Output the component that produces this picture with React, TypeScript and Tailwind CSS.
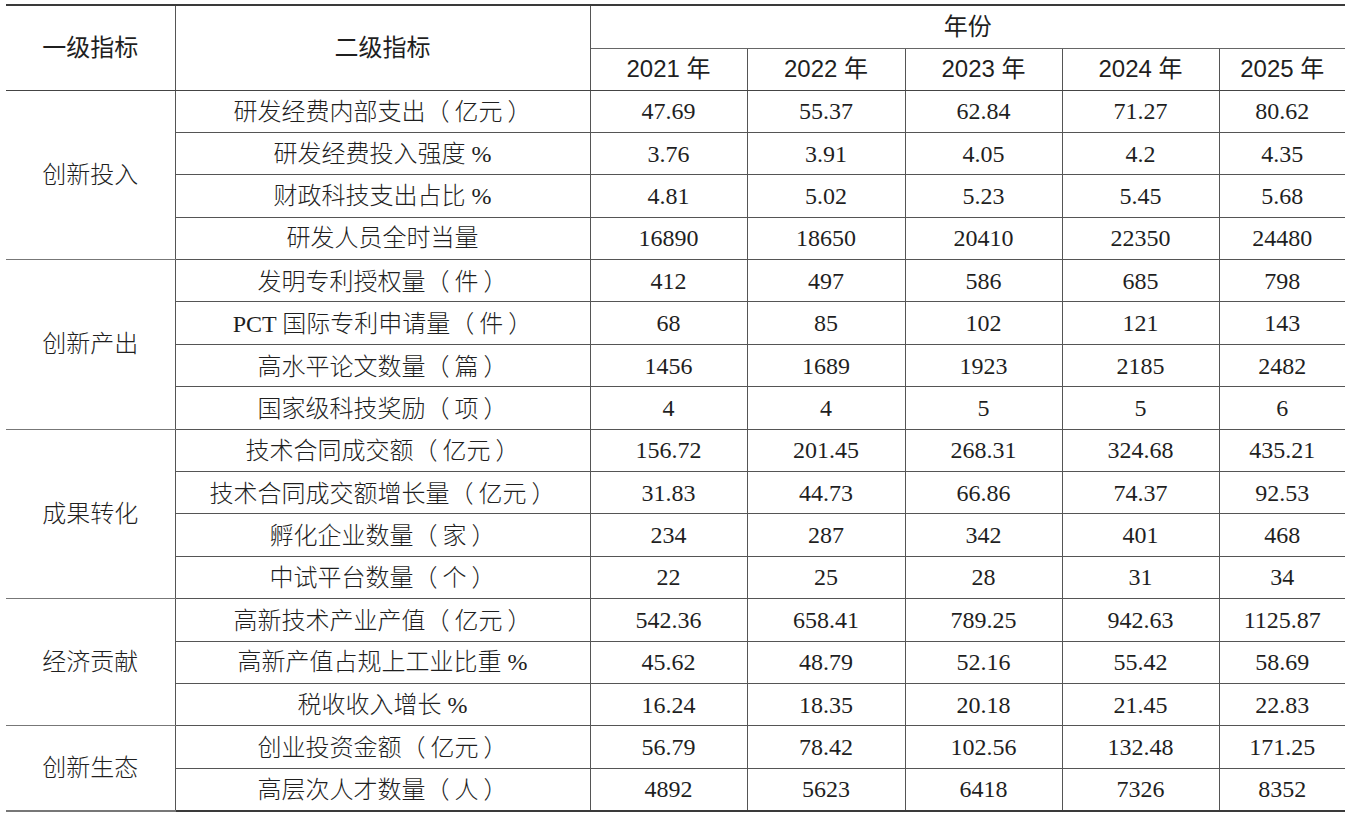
import React from 'react'

interface Row {
  name: string
  values: string[]
}

interface Group {
  title: string
  rows: Row[]
}

const years = ['2021', '2022', '2023', '2024', '2025']

const groups: Group[] = [
  {
    title: '创新投入',
    rows: [
      { name: '研发经费内部支出（亿元）', values: ['47.69', '55.37', '62.84', '71.27', '80.62'] },
      { name: '研发经费投入强度 %', values: ['3.76', '3.91', '4.05', '4.2', '4.35'] },
      { name: '财政科技支出占比 %', values: ['4.81', '5.02', '5.23', '5.45', '5.68'] },
      { name: '研发人员全时当量', values: ['16890', '18650', '20410', '22350', '24480'] },
    ],
  },
  {
    title: '创新产出',
    rows: [
      { name: '发明专利授权量（件）', values: ['412', '497', '586', '685', '798'] },
      { name: 'PCT 国际专利申请量（件）', values: ['68', '85', '102', '121', '143'] },
      { name: '高水平论文数量（篇）', values: ['1456', '1689', '1923', '2185', '2482'] },
      { name: '国家级科技奖励（项）', values: ['4', '4', '5', '5', '6'] },
    ],
  },
  {
    title: '成果转化',
    rows: [
      { name: '技术合同成交额（亿元）', values: ['156.72', '201.45', '268.31', '324.68', '435.21'] },
      { name: '技术合同成交额增长量（亿元）', values: ['31.83', '44.73', '66.86', '74.37', '92.53'] },
      { name: '孵化企业数量（家）', values: ['234', '287', '342', '401', '468'] },
      { name: '中试平台数量（个）', values: ['22', '25', '28', '31', '34'] },
    ],
  },
  {
    title: '经济贡献',
    rows: [
      { name: '高新技术产业产值（亿元）', values: ['542.36', '658.41', '789.25', '942.63', '1125.87'] },
      { name: '高新产值占规上工业比重 %', values: ['45.62', '48.79', '52.16', '55.42', '58.69'] },
      { name: '税收收入增长 %', values: ['16.24', '18.35', '20.18', '21.45', '22.83'] },
    ],
  },
  {
    title: '创新生态',
    rows: [
      { name: '创业投资金额（亿元）', values: ['56.79', '78.42', '102.56', '132.48', '171.25'] },
      { name: '高层次人才数量（人）', values: ['4892', '5623', '6418', '7326', '8352'] },
    ],
  },
]

const headFont = "font-['Liberation_Sans','Noto_Sans_CJK_SC',sans-serif]"
const bodyFont = "font-['Liberation_Serif','Noto_Sans_CJK_SC',serif]"

// the print sets full-width brackets with air inside them
function Label({ text }: { text: string }) {
  const parts = text.split(/([（）])/)
  return (
    <>
      {parts.map((p, i) => {
        if (p === '（')
          return (
            <span key={i} className="mr-[5px] font-['Noto_Sans_CJK_KR',serif]">
              {p}
            </span>
          )
        if (p === '）')
          return (
            <span key={i} className="ml-[5px] font-['Noto_Sans_CJK_KR',serif]">
              {p}
            </span>
          )
        return <React.Fragment key={i}>{p}</React.Fragment>
      })}
    </>
  )
}

export default function App() {
  return (
    <div className="min-h-[817px] bg-white pt-[4px] pl-[6px] text-[#1f1f1f]">
      <table className="w-[1339px] table-fixed border-collapse">
        <colgroup>
          <col className="w-[169px]" />
          <col className="w-[415px]" />
          <col className="w-[157px]" />
          <col className="w-[158px]" />
          <col className="w-[157px]" />
          <col className="w-[157px]" />
          <col className="w-[126px]" />
        </colgroup>
        <thead className={`${headFont} text-[24px]`}>
          <tr className="h-[43px]">
            <th
              rowSpan={2}
              className="border-t-2 border-r border-b border-t-[#3a3a3a] border-r-[#555] border-b-[#444] p-0 text-center font-normal"
            >
              一级指标
            </th>
            <th
              rowSpan={2}
              className="border-t-2 border-x border-b border-t-[#3a3a3a] border-x-[#555] border-b-[#444] p-0 text-center font-normal"
            >
              二级指标
            </th>
            <th
              colSpan={5}
              className="border-t-2 border-l border-b border-t-[#3a3a3a] border-l-[#555] border-b-[#666] p-0 text-center font-normal"
            >
              年份
            </th>
          </tr>
          <tr className="h-[42px]">
            {years.map((y, i) => (
              <th
                key={y}
                className={`border-b border-b-[#444] border-x border-x-[#555] p-0 text-center font-normal ${
                  i === years.length - 1 ? 'border-r-0' : ''
                }`}
              >
                {y} 年
              </th>
            ))}
          </tr>
        </thead>
        <tbody className={`${bodyFont} text-[24px] font-light`}>
          {groups.map((g, gi) =>
            g.rows.map((r, ri) => {
              const lastRow = gi === groups.length - 1 && ri === g.rows.length - 1
              return (
                <tr key={r.name} className="h-[42.4px]">
                  {ri === 0 && (
                    <td
                      rowSpan={g.rows.length}
                      className={`border-r border-b border-r-[#555] border-b-[#777] p-0 text-center ${
                        gi === groups.length - 1 ? 'border-b-2 border-b-[#3a3a3a]' : ''
                      }`}
                    >
                      {g.title}
                    </td>
                  )}
                  <td
                    className={`border border-[#555] p-0 text-center ${
                      lastRow ? 'border-b-2 border-b-[#3a3a3a]' : ''
                    }`}
                  >
                    <Label text={r.name} />
                  </td>
                  {r.values.map((v, vi) => (
                    <td
                      key={vi}
                      className={`border border-[#555] p-0 text-center ${
                        vi === r.values.length - 1 ? 'border-r-0' : ''
                      } ${lastRow ? 'border-b-2 border-b-[#3a3a3a]' : ''}`}
                    >
                      {v}
                    </td>
                  ))}
                </tr>
              )
            })
          )}
        </tbody>
      </table>
    </div>
  )
}
